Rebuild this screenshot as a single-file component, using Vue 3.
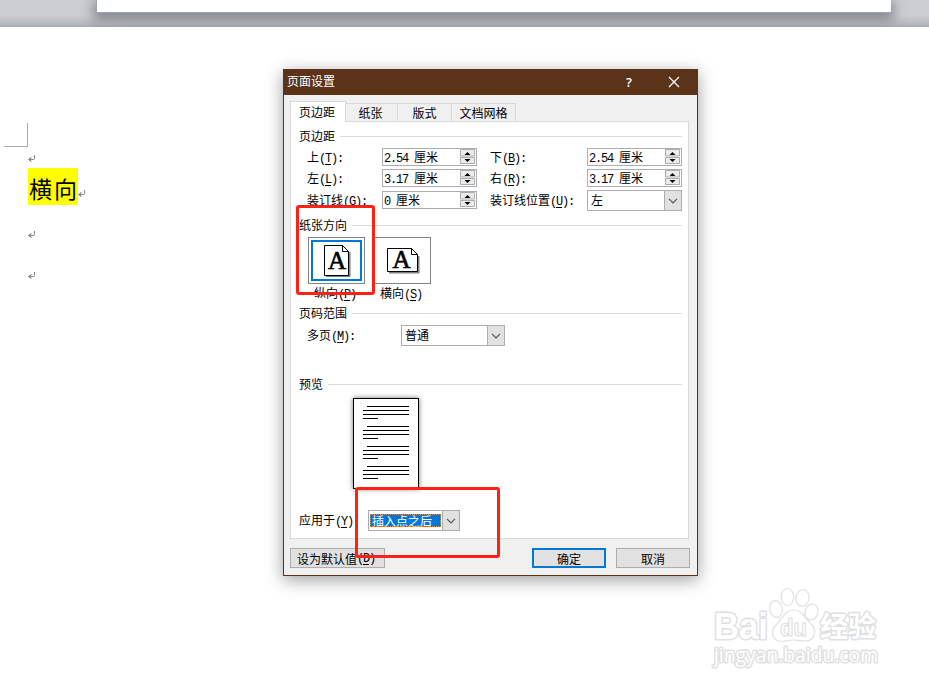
<script setup>
const tabs = [
  { name: '页边距', cls: 'active' },
  { name: '纸张', cls: 'paper' },
  { name: '版式', cls: 'layout' },
  { name: '文档网格', cls: 'gridtab' },
]
const margins = [
  { name: '上', key: 'T', num: '2.54' },
  { name: '下', key: 'B', num: '2.54' },
  { name: '左', key: 'L', num: '3.17' },
  { name: '右', key: 'R', num: '3.17' },
  { name: '装订线', key: 'G', num: '0' },
]
const marks = [
  { x: 28, y: 155 },
  { x: 78, y: 190 },
  { x: 28, y: 231 },
  { x: 28, y: 272 },
]
const paragraphs = [0, 20, 40, 60]
</script>

<template>
  <div class="screen">
    <div class="gap"><div class="sheet"></div></div>
    <div class="crop"></div>
    <div class="heading">横向</div>
    <svg class="marks" width="100" height="300" viewBox="0 0 100 300">
      <g v-for="(m, i) in marks" :key="i" :transform="`translate(${m.x} ${m.y})`">
        <path d="M6.5 0V3.5Q6.5 4.5 5.5 4.5H1M3.5 2L1 4.5L3.5 7" fill="none" stroke="#858585" />
        <path d="M0 4.5L3 2.5V6.5Z" fill="#858585" />
      </g>
    </svg>

    <section class="dialog">
      <header class="title">
        <span class="name">页面设置</span>
        <span class="help">?</span>
        <svg width="12" height="12" viewBox="0 0 12 12"><path d="M1 1L11 11M11 1L1 11" stroke="#fff" stroke-width="1.2" /></svg>
      </header>
      <div class="content">
        <nav class="tabs">
          <div v-for="t in tabs" :key="t.name" class="tab" :class="t.cls">{{ t.name }}</div>
        </nav>
        <main class="panel">
          <h3 class="g1">页边距</h3>
          <div class="fields">
            <template v-for="f in margins" :key="f.key">
              <label>{{ f.name }}<span class="m">(<u>{{ f.key }}</u>):</span></label>
              <div class="spin">
                <span class="val"><span class="m">{{ f.num }}&nbsp;</span>厘米</span>
                <svg width="16" height="16" viewBox="0 0 16 16">
                  <path d="M0 0H16V16H0Z" fill="#fff" />
                  <path d="M.5 .5H14.5V7H.5ZM.5 8.5H14.5V14.5H.5Z" fill="#ececec" stroke="#adadad" />
                  <path d="M4.5 6L7.5 3L10.500 6ZM4.500 10L7.500 13L10.500 10Z" fill="#000" />
                </svg>
              </div>
            </template>
            <label>装订线位置<span class="m">(<u>U</u>):</span></label>
            <div class="combo"><span>左</span><i><svg width="10" height="6" viewBox="0 0 10 6"><path d="M1 .8L5 4.8L9 .8" fill="none" stroke="#555" stroke-width="1.2" /></svg></i></div>
          </div>

          <h3 class="g2">纸张方向</h3>
          <div class="orient">
            <div class="option">
              <div class="frame chosen">
                <svg width="28" height="33" viewBox="0 0 28 33">
                  <path d="M3 32H26.500V8" fill="none" stroke="#808080" stroke-width="2" />
                  <path d="M1.500 1.500H19.500L25.500 7.500V31.500H1.500Z" fill="#fff" stroke="#000" />
                  <path d="M19.500 1.500V7.500H25.500" fill="none" stroke="#000" />
                  <text x="14" y="24.500" text-anchor="middle">A</text>
                </svg>
              </div>
              <span class="cap">纵向<span class="m">(<u>P</u>)</span></span>
            </div>
            <div class="option">
              <div class="frame">
                <svg width="34" height="27" viewBox="0 0 34 27">
                  <path d="M3 25.500H32.500V9" fill="none" stroke="#808080" stroke-width="2" />
                  <path d="M1.500 1.500H25.500L31.500 7.500V24.500H1.500Z" fill="#fff" stroke="#000" />
                  <path d="M25.500 1.500V7.500H31.500" fill="none" stroke="#000" />
                  <text x="15.500" y="20.500" text-anchor="middle">A</text>
                </svg>
              </div>
              <span class="cap">横向<span class="m">(<u>S</u>)</span></span>
            </div>
          </div>

          <h3 class="g3">页码范围</h3>
          <div class="pages">
            <label>多页<span class="m">(<u>M</u>):</span></label>
            <div class="combo"><span>普通</span><i><svg width="10" height="6" viewBox="0 0 10 6"><path d="M1 .8L5 4.8L9 .8" fill="none" stroke="#555" stroke-width="1.2" /></svg></i></div>
          </div>

          <h3 class="g4">预览</h3>
          <div class="preview">
            <svg width="64" height="89" viewBox="0 0 64 89" shape-rendering="crispEdges">
              <path v-for="p in paragraphs" :key="p" :transform="`translate(0 ${p})`" d="M13 7.5H55M9 11.5H55M9 15.5H55M9 19.5H24" stroke="#000" />
            </svg>
          </div>
          <div class="apply">
            <label>应用于<span class="m">(<u>Y</u>)</span></label>
            <div class="combo"><span class="sel">插入点之后</span><i><svg width="10" height="6" viewBox="0 0 10 6"><path d="M1 .8L5 4.8L9 .8" fill="none" stroke="#555" stroke-width="1.2" /></svg></i></div>
          </div>
        </main>
        <footer>
          <button class="default">设为默认值<span class="m">(<u>D</u>)</span></button>
          <button class="ok">确定</button>
          <button class="cancel">取消</button>
        </footer>
      </div>
    </section>
    <div class="ring ring-orient"></div>
    <div class="ring ring-apply"></div>

    <svg class="watermark" width="180" height="90" viewBox="0 0 180 90">
      <g fill="#fff" stroke="#e0e0e0" stroke-width="1.2" stroke-linejoin="round">
        <g class="rim">
          <text class="logo" x="4" y="58" textLength="54" lengthAdjust="spacingAndGlyphs">Bai</text>
          <text class="cn" x="110" y="56" textLength="56" lengthAdjust="spacingAndGlyphs">经验</text>
          <text class="url" x="4" y="81" textLength="164" lengthAdjust="spacingAndGlyphs">jingyan.baidu.com</text>
        </g>
        <ellipse cx="66" cy="28" rx="6.3" ry="8.5" transform="rotate(-12 66 28)" />
        <ellipse cx="77.500" cy="16" rx="6.300" ry="8.500" />
        <ellipse cx="92.500" cy="17" rx="6.500" ry="8.300" transform="rotate(10 92.5 17)" />
        <ellipse cx="101.500" cy="31" rx="6.500" ry="8" transform="rotate(15 101.5 31)" />
        <path d="M84 29C93 29 95 38 102 44C107 50 104 60 96 60C90 60 88 59 83 59C78 59 74 61 69 60C61 58 61 48 66 44C73 38 74 29 84 29Z" />
        <text class="du" x="70" y="55" textLength="27" lengthAdjust="spacingAndGlyphs">du</text>
      </g>
    </svg>
  </div>
</template>

<style>
body { margin: 0; background: #fff; }
</style>

<style scoped>
* { box-sizing: border-box; }
.screen {
  position: relative; width: 929px; height: 687px; overflow: hidden; background: #fff;
  font: 12px/18px "Noto Sans CJK SC", sans-serif; color: #000;
}
.gap { height: 27px; padding: 0 38px 0 96px; overflow: hidden; background: linear-gradient(#cbced3 0, #cbced3 15px, #b6b9be 24px, #a7abb1 27px); }
.sheet { height: 13px; background: #fff; border: solid #9ba3af; border-width: 0 0 1px 1px; box-shadow: 0 4px 12px 3px rgba(65, 70, 75, .5); }
.crop { position: absolute; left: 4px; top: 123px; width: 24px; height: 24px; border: solid #aaa; border-width: 0 1px 1px 0; }
.heading { position: absolute; left: 28px; top: 168px; width: 50px; height: 37px; padding-left: 1px; background: #ff0; font-size: 23px; line-height: 40px; letter-spacing: 2px; white-space: nowrap; }
.marks { position: absolute; left: 0; top: 0; }
.m { font-family: "Liberation Mono", monospace; letter-spacing: -1.2px; }
.m u { text-underline-offset: 2px; text-decoration-thickness: 1px; }

.dialog {
  position: absolute; left: 283px; top: 69px; width: 415px; height: 507px;
  background: #f0f0f0; border: 1px solid #5b3319; border-top: 0; box-shadow: 0 4px 16px rgba(0, 0, 0, .38);
}
.title { height: 26px; display: flex; align-items: center; padding: 0 17px 0 3px; background: #5b3319; color: #fff; }
.name { padding-bottom: 2px; }
.help { margin-left: auto; margin-right: 36px; font: 600 13px "Open Sans", sans-serif; }
.content { padding: 6px 7px 0 6px; }
.tabs { height: 20px; display: flex; align-items: flex-end; }
.tab { height: 18px; border: solid #d9d9d9; border-width: 1px 1px 0 0; text-align: center; line-height: 18px; }
.active { width: 56px; height: 21px; margin-bottom: -1px; position: relative; background: #fff; border-left-width: 1px; line-height: 20px; padding-right: 2px; }
.paper { width: 52px; padding-right: 2px; }
.layout { width: 54px; }
.gridtab { width: 64px; }
.panel { width: 399px; height: 418px; padding: 5px 6px 0 8px; background: #fff; border: 1px solid #d9d9d9; }
h3 { display: flex; align-items: center; gap: 5px; height: 18px; margin: 0; font: inherit; white-space: nowrap; }
h3::after { content: ""; flex: 1; height: 1px; background: #dcdcdc; }
.fields { display: grid; grid-template-columns: 75px 95px 110px 95px; grid-template-rows: 18px 18px 21px; row-gap: 3px; margin: 3px 0 0 8px; }
.fields label { white-space: nowrap; line-height: 17px; }
.fields label:nth-of-type(even) { padding-left: 13px; }
.fields label:nth-of-type(n+5) { line-height: 19px; }
.spin { height: 18px; display: flex; justify-content: space-between; border: 1px solid #abadb3; background: #fff; line-height: 15px; padding-left: 1px; }
.val { white-space: nowrap; }
.fields .spin:nth-of-type(5) { margin-top: 1px; }
.combo { height: 21px; display: flex; border: 1px solid #abadb3; background: #fff; line-height: 18px; padding-left: 3px; }
.combo > span { flex: 1; white-space: nowrap; }
.combo i { width: 18px; height: 21px; margin: -1px -1px 0 0; border: 1px solid #adadad; background: #e1e1e1; display: flex; align-items: center; justify-content: center; }
.g2 { margin-top: 5px; }
.orient { display: flex; gap: 9px; margin: 3px 0 0 9px; height: 65px; }
.option { width: 57px; display: flex; flex-direction: column; }
.frame { flex: none; height: 47px; border: 1px solid #83838b; display: flex; align-items: center; justify-content: center; position: relative; }
.frame text { font: 25px "Liberation Serif", serif; stroke: #000; stroke-width: .7px; }
.chosen::before { content: ""; position: absolute; inset: 2px; border: 2px solid #0078d7; }
.cap { padding-left: 6px; white-space: nowrap; }
.g3 { margin-top: 2px; }
.pages { display: flex; margin: 3px 0 0 8px; }
.pages label { width: 94px; line-height: 19px; }
.pages .combo { width: 104px; }
.g4 { margin-top: 28px; }
.preview { width: 66px; height: 91px; margin: 5px 0 0 54px; border: 1px solid #000; background: #fff; box-shadow: 0 0 5px rgba(0, 0, 0, .55); }
.preview svg { display: block; }
.apply { display: flex; margin-top: 21px; }
.apply label { width: 69px; line-height: 19px; }
.apply .combo { width: 92px; padding-left: 1px; }
.apply .sel { flex: none; width: 71px; height: 13px; margin: 3px 1px 0 0; padding-left: 2px; background: #0078d7; color: #fff; line-height: 13px; outline: 1px dotted #ff8728; outline-offset: -1px; }
footer { display: flex; margin-top: 9px; }
button { height: 20px; padding: 2px 0 0; border: 1px solid #adadad; border-radius: 0; background: #e1e1e1; font: 12px/18px "Noto Sans CJK SC", sans-serif; color: #000; white-space: nowrap; display: flex; justify-content: center; align-items: center; }
.default { width: 95px; padding-right: 3px; }
.ok { width: 74px; margin-left: 147px; border: 2px solid #0078d7; }
.cancel { width: 74px; margin-left: 10px; }
.ring { position: absolute; border: 3px solid #ff2116; border-radius: 3px; }
.ring-orient { left: 296px; top: 205px; width: 79px; height: 90px; }
.ring-apply { left: 355px; top: 487px; width: 145px; height: 71px; }
.watermark { position: absolute; left: 710px; top: 581px; }
.rim text { stroke-width: 3px; paint-order: stroke; }
.logo { font: bold 37px "Liberation Sans", sans-serif; }
.du { font: bold 24px "Liberation Sans", sans-serif; }
.cn { font: bold 28px "Noto Sans CJK SC", sans-serif; }
.url { font: 20px "Open Sans", sans-serif; }
</style>
